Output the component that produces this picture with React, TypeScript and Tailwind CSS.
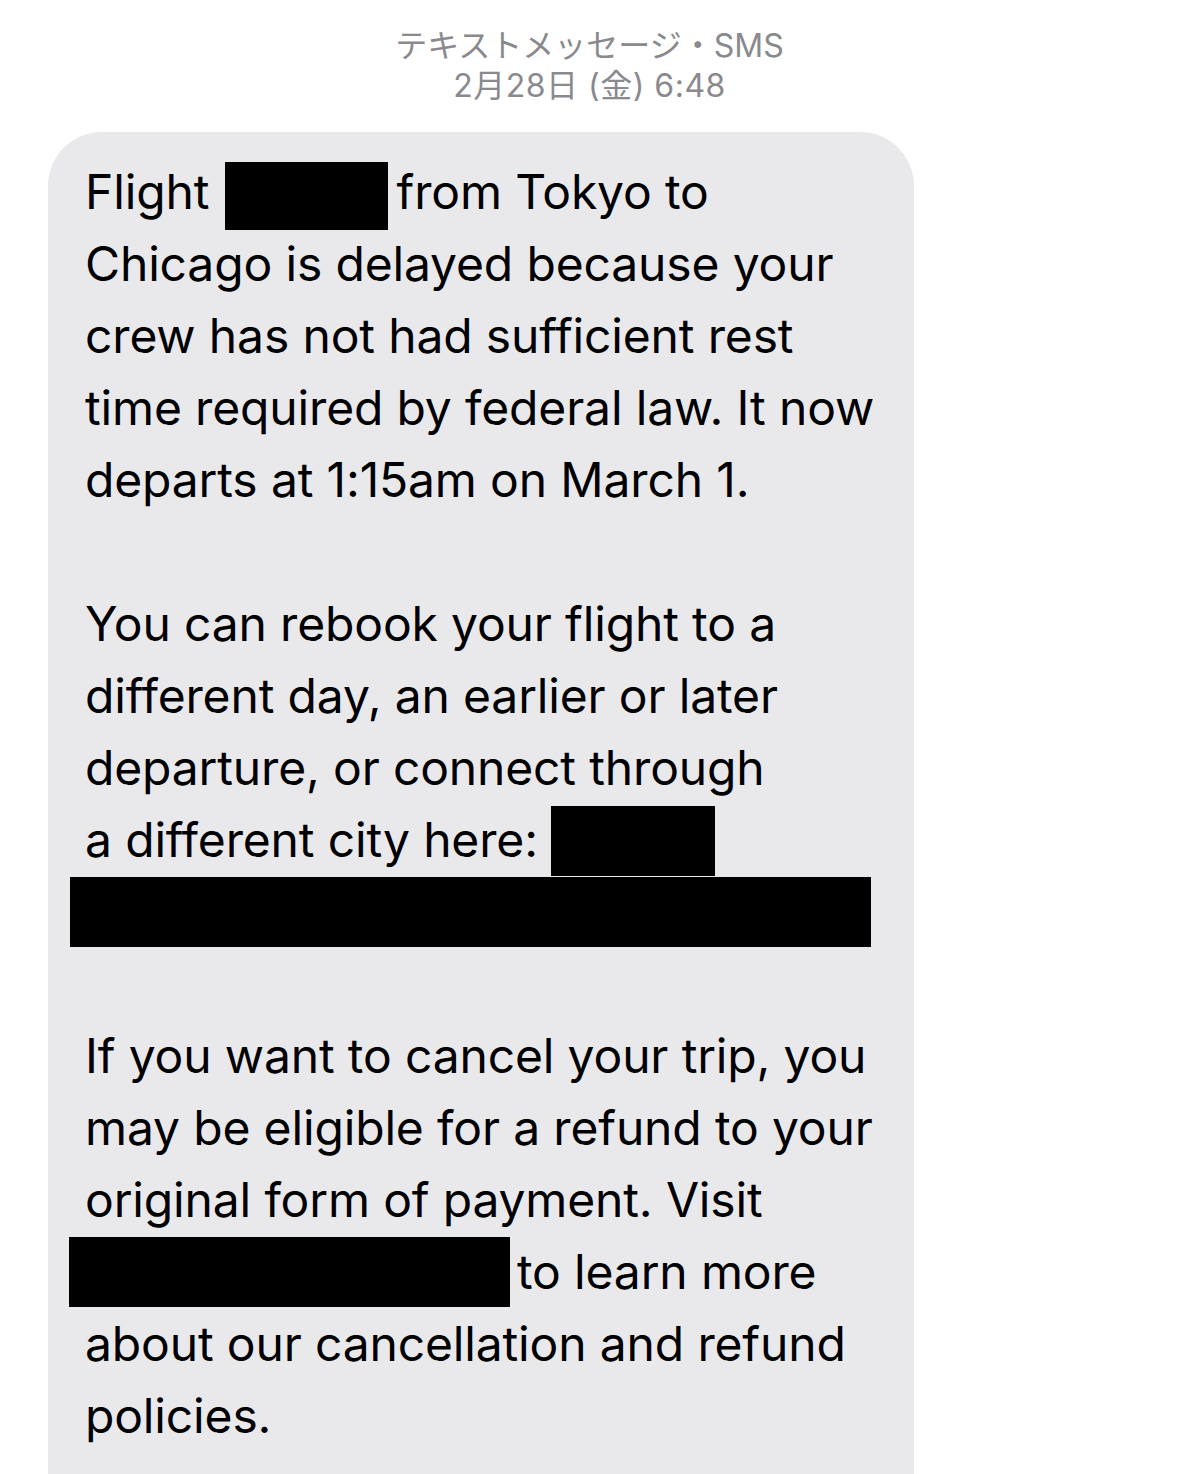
const font = { fontFamily: 'Inter, "Noto Sans CJK JP", sans-serif' }

function Redact({ className }: { className: string }) {
  return <span className={`inline-block bg-black shrink-0 ${className}`} />
}

function Line({ children }: { children?: React.ReactNode }) {
  return <div className="flex items-start h-[72px] whitespace-pre leading-[72px]">{children}</div>
}

export default function App() {
  return (
    <div className="min-h-[1474px] bg-white overflow-hidden" style={font}>
      {/* ヘッダー */}
      <div className="pt-[26px] text-center text-[32px] leading-[40px] text-[#8a8a8e]">
        <p>テキストメッセージ・SMS</p>
        <p className="tracking-[0.5px]">2月28日 (金) 6:48</p>
      </div>

      {/* 吹き出し */}
      <div className="mt-[26px] ml-[48px] w-[866px] rounded-t-[54px] bg-[#e9e9eb] pl-[37px] pt-[24px] pb-[40px] text-[48px] tracking-[-0.15px] text-black">
        <Line>
          Flight <Redact className="ml-[2px] mt-[6px] h-[68px] w-[163px] mr-[9px]" />from Tokyo to
        </Line>
        <Line>Chicago is delayed because your</Line>
        <Line>crew has not had sufficient rest</Line>
        <Line>time required by federal law. It now</Line>
        <Line>departs at 1:15am on March 1.</Line>
        <Line />
        <Line>You can rebook your flight to a</Line>
        <Line>different day, an earlier or later</Line>
        <Line>departure, or connect through</Line>
        <Line>
          a different city here: <Redact className="mt-[2px] h-[70px] w-[164px]" />
        </Line>
        <Line>
          <Redact className="-ml-[15px] mt-[1px] h-[70px] w-[801px]" />
        </Line>
        <Line />
        <Line>If you want to cancel your trip, you</Line>
        <Line>may be eligible for a refund to your</Line>
        <Line>original form of payment. Visit</Line>
        <Line>
          <Redact className="-ml-[16px] mt-[1px] mr-[7px] h-[70px] w-[441px]" />to learn more
        </Line>
        <Line>about our cancellation and refund</Line>
        <Line>policies.</Line>
      </div>
    </div>
  )
}
